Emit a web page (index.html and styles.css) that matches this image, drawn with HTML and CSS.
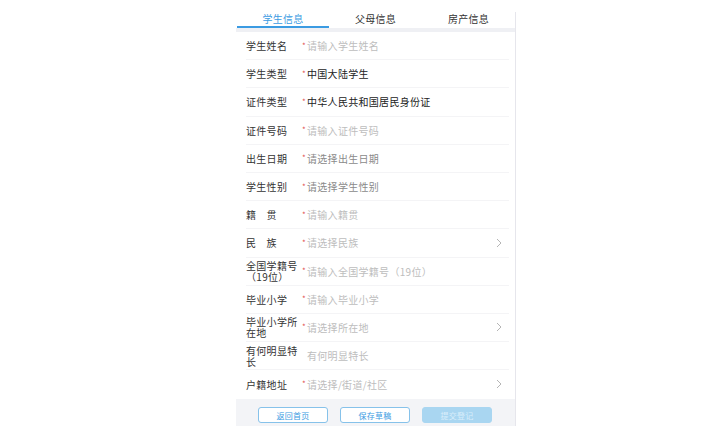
FILE: index.html
```html
<html>
<head>
    <meta charset="utf-8">
    <title>学生信息</title>
    <link rel="stylesheet" href="styles.css">
</head>
<body>
    <div class="page">
        <div class="tabs">
            <div class="tab active">学生信息</div>
            <div class="tab">父母信息</div>
            <div class="tab">房产信息</div>
        </div>
        <div class="band"></div>

        <div class="form">
            <div class="row">
                <div class="label">学生姓名</div>
                <span class="star">*</span><span class="value ph">请输入学生姓名</span>
            </div>
            <div class="row">
                <div class="label">学生类型</div>
                <span class="star">*</span><span class="value">中国大陆学生</span>
            </div>
            <div class="row">
                <div class="label">证件类型</div>
                <span class="star">*</span><span class="value">中华人民共和国居民身份证</span>
            </div>
            <div class="row">
                <div class="label">证件号码</div>
                <span class="star">*</span><span class="value ph">请输入证件号码</span>
            </div>
            <div class="row">
                <div class="label">出生日期</div>
                <span class="star">*</span><span class="value ph dark">请选择出生日期</span>
            </div>
            <div class="row">
                <div class="label">学生性别</div>
                <span class="star">*</span><span class="value ph dark">请选择学生性别</span>
            </div>
            <div class="row">
                <div class="label">籍　贯</div>
                <span class="star">*</span><span class="value ph">请输入籍贯</span>
            </div>
            <div class="row">
                <div class="label">民　族</div>
                <span class="star">*</span><span class="value ph">请选择民族</span>
                <svg class="arrow" width="6" height="10" viewBox="0 0 6 10"><polyline points="1,1 5,5 1,9" fill="none" stroke="#b5b5b5" stroke-width="1"/></svg>
            </div>
            <div class="row">
                <div class="label">全国学籍号（19位）</div>
                <span class="star">*</span><span class="value ph">请输入全国学籍号（19位）</span>
            </div>
            <div class="row">
                <div class="label">毕业小学</div>
                <span class="star">*</span><span class="value ph">请输入毕业小学</span>
            </div>
            <div class="row">
                <div class="label">毕业小学所在地</div>
                <span class="star">*</span><span class="value ph">请选择所在地</span>
                <svg class="arrow" width="6" height="10" viewBox="0 0 6 10"><polyline points="1,1 5,5 1,9" fill="none" stroke="#b5b5b5" stroke-width="1"/></svg>
            </div>
            <div class="row">
                <div class="label">有何明显特长</div>
                <span class="star none">*</span><span class="value ph">有何明显特长</span>
            </div>
            <div class="row last">
                <div class="label">户籍地址</div>
                <span class="star">*</span><span class="value ph">请选择/街道/社区</span>
                <svg class="arrow" width="6" height="10" viewBox="0 0 6 10"><polyline points="1,1 5,5 1,9" fill="none" stroke="#b5b5b5" stroke-width="1"/></svg>
            </div>
        </div>

        <div class="bottom">
            <button class="btn">返回首页</button>
            <button class="btn">保存草稿</button>
            <button class="btn submit">提交登记</button>
        </div>
    </div>
</body>
</html>
```

FILE: styles.css
```css
* {
    font-family: "Noto Sans CJK SC", "Noto Sans", sans-serif;
    box-sizing: border-box;
}

body {
    margin: 0;
    background: #ffffff;
}

.page {
    width: 280px;
    margin: 12px 0 0 236px;
    border-right: 1px solid #e6e6ec;
}

.tabs {
    display: grid;
    grid-template-columns: 1fr 1fr 1fr;
    height: 16px;
}

.tab {
    font-size: 10px;
    letter-spacing: 0.3px;
    line-height: 13px;
    text-align: center;
    color: #333333;
}

.tab.active {
    color: #3b9be2;
    border-bottom: 2px solid #3b9be2;
    margin-left: 1px;
}

.band {
    height: 4px;
    background: #eff0f4;
}

.row {
    display: flex;
    align-items: center;
    height: 28.2px;
    margin: 0 6px 0 10px;
    border-bottom: 1px solid #f4f4f6;
}

.row.last {
    border-bottom: none;
}

.label {
    width: 56px;
    font-size: 10px;
    letter-spacing: 0.3px;
    line-height: 11px;
    color: #333333;
}

.star {
    width: 5px;
    font-size: 8px;
    color: #e2504e;
    line-height: 8px;
}

.star.none {
    visibility: hidden;
}

.value {
    flex: 1;
    font-size: 10px;
    letter-spacing: 0.3px;
    color: #222222;
}

.value.ph {
    color: #bdbdbd;
}

.value.ph.dark {
    color: #8a8a8a;
}

.arrow {
    margin-right: 7px;
}

.bottom {
    display: flex;
    gap: 12px;
    height: 27px;
    padding: 8px 0 0 22px;
    margin-top: 1px;
    background: #f3f4f7;
}

.btn {
    width: 70px;
    height: 16px;
    padding: 0;
    border: 1px solid #86c2ea;
    border-radius: 3px;
    background: #ffffff;
    color: #3b9be2;
    font-size: 8px;
    letter-spacing: 0.3px;
}

.btn.submit {
    background: #a9d6f1;
    border-color: #a9d6f1;
    color: #d9eefb;
}
```
